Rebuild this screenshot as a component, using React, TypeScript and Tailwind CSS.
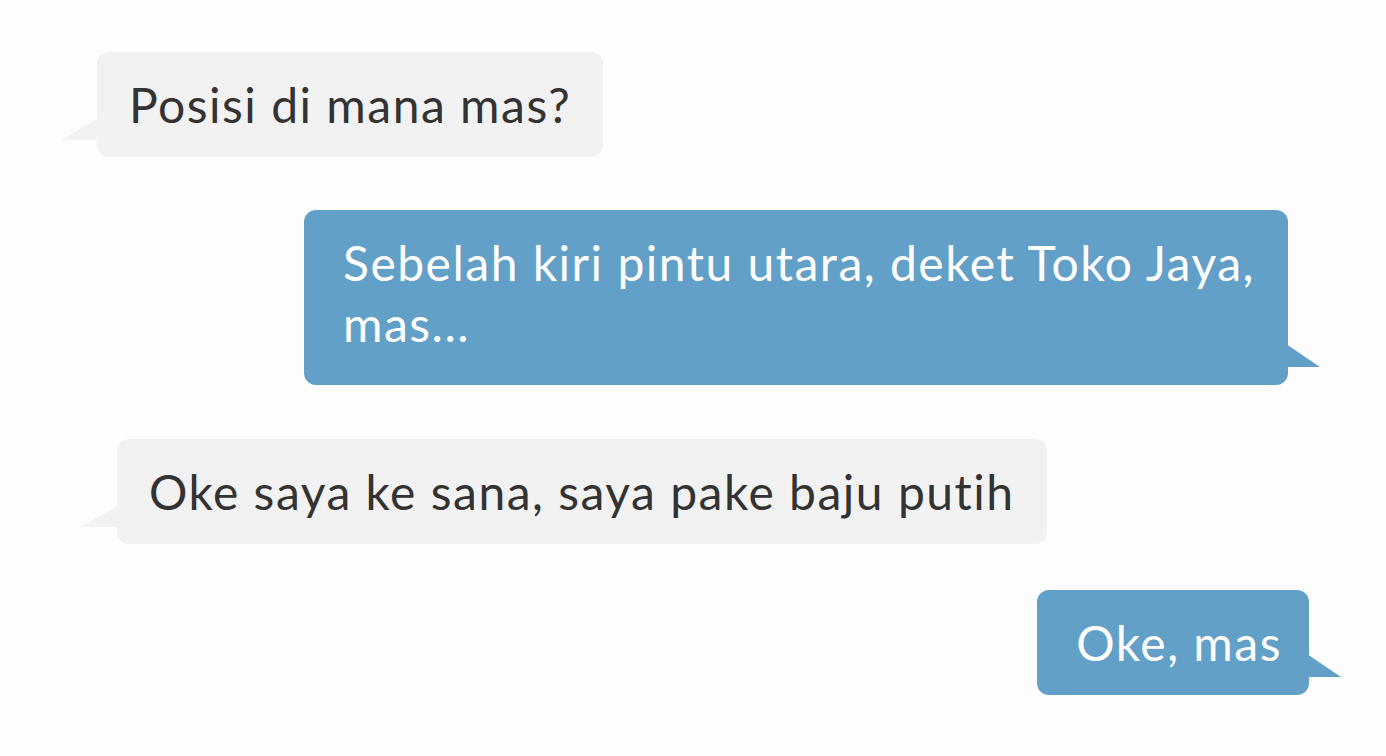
const messages = [
  { id: 1, mine: false, text: 'Posisi di mana mas?', wrap: 'ml-[97px] mt-[52px] pb-[22px]' },
  { id: 2, mine: true, text: 'Sebelah kiri pintu utara, deket Toko Jaya, mas...', wrap: 'mr-[98px] mt-[53px] w-[984px] pb-[31px]' },
  { id: 3, mine: false, text: 'Oke saya ke sana, saya pake baju putih', wrap: 'ml-[117px] mt-[54px] pb-[22px]' },
  { id: 4, mine: true, text: 'Oke, mas', wrap: 'mr-[77px] mt-[46px] pb-[22px]' },
];

function Tail({ mine }: { mine: boolean }) {
  // little triangle sticking out at the lower corner of the bubble
  return mine ? (
    <svg className="absolute -right-[34px] bottom-[18px]" width="36" height="23" viewBox="0 0 36 23">
      <path d="M0 0 L34 23 L0 23 Z" fill="#62a0c8" />
    </svg>
  ) : (
    <svg className="absolute -left-[36px] bottom-[17px]" width="38" height="22" viewBox="0 0 38 22">
      <path d="M38 0 L0 22 L38 22 Z" fill="#f2f2f2" />
    </svg>
  );
}

export default function App() {
  return (
    <div className="w-[1386px] h-[756px] overflow-hidden bg-[#fdfdfd] flex flex-col" style={{ fontFamily: 'Lato, "Open Sans", sans-serif' }}>
      {messages.map((m) => (
        <div key={m.id} className={`flex ${m.mine ? 'justify-end' : 'justify-start'}`}>
          <div
            className={`relative rounded-[12px] text-[48px] tracking-[1.5px] leading-[61px] pt-[22px] ${m.wrap} ${
              m.mine
                ? 'bg-[#62a0c8] text-white pl-[39px] pr-[27px]'
                : 'bg-[#f2f2f2] text-[#333333] px-[32px]'
            }`}
          >
            {m.text}
            <Tail mine={m.mine} />
          </div>
        </div>
      ))}
    </div>
  );
}
